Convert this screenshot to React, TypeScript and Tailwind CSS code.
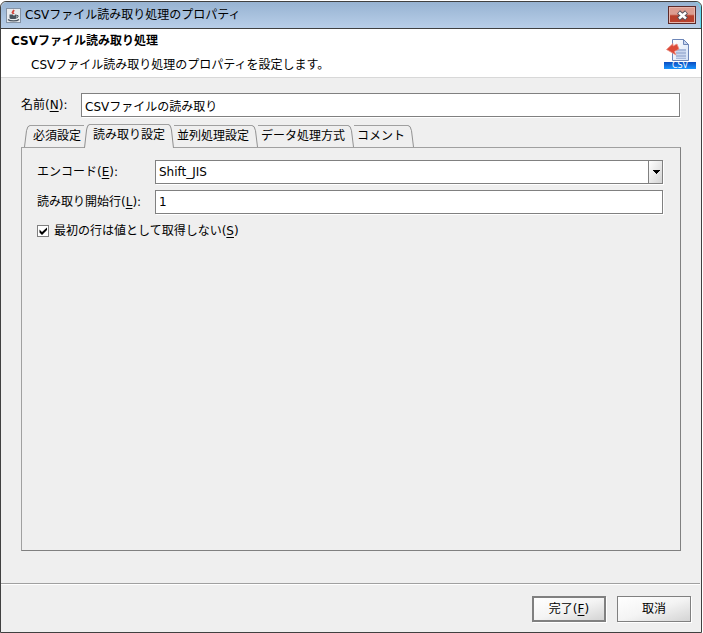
import { useState, type ReactNode } from "react";

const tabs = [
  "必須設定",
  "読み取り設定",
  "並列処理設定",
  "データ処理方式",
  "コメント",
];

const sunken = "h-6 border border-[#808080] bg-white px-[3px] outline-none shadow-[1px_1px_0_#fff]";

function Mnemonic({ text, letter, end = "" }: { text: string; letter: string; end?: string }) {
  return (
    <>
      {text}(<span className="underline underline-offset-2">{letter}</span>){end}
    </>
  );
}

function CupIcon() {
  return (
    <svg width="15" height="15" viewBox="0 0 15 15" aria-hidden="true">
      <rect x="0.5" y="0.5" width="14" height="14" fill="#e9ebee" stroke="#8593a5" />
      <path d="M8 2L6.5 4.5 8 6.500" fill="none" stroke="#d2453c" strokeWidth="1.8" />
      <path d="M3.500 6.500h7V10l-1 1h-5l-1-1z" fill="#4a545f" />
      <path d="M6.500 6L8 8l1.500-2z" fill="#e9ebee" />
      <path d="M10.500 7.500H12V9l-1.500 1" fill="none" stroke="#4a545f" />
      <path d="M2 11.500c2 1.800 9 1.800 11 0" fill="none" stroke="#4a545f" strokeWidth="1.4" />
    </svg>
  );
}

function CsvIcon() {
  return (
    <svg width="32" height="32" viewBox="0 0 32 32" aria-label="CSV" role="img">
      <defs>
        <linearGradient id="csvBand" x1="0" y1="0" x2="0" y2="1">
          <stop offset="0" stopColor="#0b4cc0" />
          <stop offset="1" stopColor="#1a96ff" />
        </linearGradient>
        <linearGradient id="csvPage" x1="0" y1="0" x2="1" y2="1">
          <stop offset="0" stopColor="#ffffff" />
          <stop offset="1" stopColor="#d5e2f6" />
        </linearGradient>
      </defs>
      <path d="M8.500 1.500h11l5 5v16h-16z" fill="url(#csvPage)" stroke="#6d86b8" />
      <path d="M19.500 1.500v5h5z" fill="#c8d6ef" stroke="#6d86b8" />
      <path d="M12 11h10v10H12z" fill="#a9badb" />
      <path d="M12 13.500h10M12 16.500h10M12 19.500h10" stroke="#c9d6ee" />
      <path d="M2.500 11.500L9 5.500v2.500l4-2 2 5-4.500 2.500 1.500 3.500z" fill="#dc4a38" stroke="#ea9287" strokeWidth="0.8" />
      <rect y="24" width="32" height="7" fill="url(#csvBand)" />
      <text
        x="16"
        y="30"
        textAnchor="middle"
        fontSize="8"
        fill="#fff"
        fontFamily="DejaVu Sans, sans-serif"
      >
        CSV
      </text>
    </svg>
  );
}

function LeftSlope() {
  return (
    <svg className="h-full w-1.5 shrink-0" viewBox="0 0 6 23" preserveAspectRatio="none" aria-hidden="true">
      <path d="M.5 23L2.500 6Q3.500 .5 6 .5" fill="none" stroke="#8f8f8f" />
    </svg>
  );
}

function RightSlope() {
  return (
    <svg className="h-full w-1.5 shrink-0" viewBox="0 0 6 23" preserveAspectRatio="none" aria-hidden="true">
      <path d="M0 .5Q2.500 .5 3.500 6L5.500 23" fill="none" stroke="#8f8f8f" />
    </svg>
  );
}

type TabProps = {
  label: string;
  selected: boolean;
  first: boolean;
  beforeSelected: boolean;
  onSelect: () => void;
};

function Tab({ label, selected, first, beforeSelected, onSelect }: TabProps) {
  return (
    <button
      type="button"
      role="tab"
      aria-selected={selected}
      onClick={onSelect}
      className={
        selected
          ? "relative z-10 -mb-px flex h-6 bg-[#efefef]"
          : "flex h-[22px]"
      }
    >
      {(first || selected) && <LeftSlope />}
      <span className="h-full whitespace-nowrap border-t border-[#a0a0a0] px-[3px] leading-5">
        {label}
      </span>
      {!beforeSelected && <RightSlope />}
    </button>
  );
}

function Row({ id, label, children }: { id: string; label: ReactNode; children: ReactNode }) {
  return (
    <div className="flex items-center">
      <label htmlFor={id} className="w-[118px] shrink-0 whitespace-nowrap">
        {label}
      </label>
      {children}
    </div>
  );
}

export default function App() {
  const [active, setActive] = useState(1);

  return (
    <div className="min-h-screen bg-white pr-px pt-px font-['DejaVu_Sans','Noto_Sans_CJK_JP',sans-serif] text-xs text-black">
      <div className="flex min-h-[calc(100vh-1px)] flex-col rounded-t-md border border-[#404040] bg-[#efefef]">
        <header className="flex h-[27px] items-center rounded-t-md border-b border-[#404040] bg-linear-to-b from-[#97b3d2] to-[#b8cee8] pl-[5px] pr-1 shadow-[inset_-1px_0_0_#5fd8ee]">
          <CupIcon />
          <h1 className="ml-1 grow">CSVファイル読み取り処理のプロパティ</h1>
          <button
            type="button"
            aria-label="閉じる"
            className="mr-px flex h-[18px] w-7 items-center justify-center border border-[#5c2a2a] bg-linear-to-b from-[#dc9c90] from-45% to-[#b8402c] to-55% shadow-[inset_0_0_0_1px_#e6b5ac]"
          >
            <svg width="13" height="11" viewBox="0 0 13 11" aria-hidden="true">
              <path d="M2.500 2l8 7M10.500 2l-8 7" stroke="#56505a" strokeWidth="4.500" />
              <path d="M3 2.500l7 6M10 2.500l-7 6" stroke="#fff" strokeWidth="2.500" />
            </svg>
          </button>
        </header>

        <div className="flex h-[49px] justify-between border-b border-[#d8d8d8] bg-white pl-2.5 pr-[5px]">
          <div>
            <h2 className="mt-1 font-bold leading-4">CSVファイル読み取り処理</h2>
            <p className="ml-5 mt-2 leading-4">CSVファイル読み取り処理のプロパティを設定します。</p>
          </div>
          <div className="pt-[9px]">
            <CsvIcon />
          </div>
        </div>

        <main className="flex grow flex-col px-5 pb-8 pt-[15px]">
          <div className="mr-px flex items-center">
            <label htmlFor="name" className="w-[60px] shrink-0">
              <Mnemonic text="名前" letter="N" end=":" />
            </label>
            <input id="name" defaultValue="CSVファイルの読み取り" className={`min-w-0 grow ${sunken}`} />
          </div>

          <div role="tablist" className="mt-[7px] flex h-[23px] items-end pl-[3px]">
            {tabs.map((label, i) => (
              <Tab
                key={label}
                label={label}
                selected={i === active}
                first={i === 0}
                beforeSelected={i === active - 1}
                onSelect={() => setActive(i)}
              />
            ))}
          </div>

          <div
            role="tabpanel"
            className="flex grow flex-col gap-1.5 border border-b-[#808080] border-l-[#a0a0a0] border-r-[#808080] border-t-[#a0a0a0] py-3 pl-[15px] pr-[17px]"
          >
            <Row id="encoding" label={<Mnemonic text="エンコード" letter="E" end=":" />}>
              <div className="relative min-w-0 grow">
                <select id="encoding" className={`block w-full appearance-none ${sunken}`}>
                  <option>Shift_JIS</option>
                  <option>UTF-8</option>
                  <option>EUC-JP</option>
                </select>
                <span className="pointer-events-none absolute inset-y-px right-px flex w-3.5 items-center justify-center border-l border-[#808080] bg-linear-to-br from-white to-[#d4d4d4]">
                  <svg width="8" height="4" viewBox="0 0 8 4" shapeRendering="crispEdges" aria-hidden="true">
                    <path d="M0 0h8L4 4z" />
                  </svg>
                </span>
              </div>
            </Row>
            <Row id="start" label={<Mnemonic text="読み取り開始行" letter="L" end=":" />}>
              <input id="start" defaultValue="1" className={`min-w-0 grow ${sunken}`} />
            </Row>
            <label className="flex items-center gap-[5px] leading-[22px]">
              <span className="grid">
                <input
                  type="checkbox"
                  defaultChecked
                  className="peer col-start-1 row-start-1 size-3 appearance-none border border-[#808080] bg-white"
                />
                <svg
                  className="pointer-events-none invisible col-start-1 row-start-1 size-3 peer-checked:visible"
                  viewBox="0 0 12 12"
                  aria-hidden="true"
                >
                  <path d="M2.500 4.500v3L5 10l5-5V2.500L5 7z" />
                </svg>
              </span>
              <span>
                <Mnemonic text="最初の行は値として取得しない" letter="S" />
              </span>
            </label>
          </div>
        </main>

        <footer className="mr-px flex justify-end gap-[11px] border-t border-[#a0a0a0] pb-2.5 pr-[9px] pt-3 shadow-[inset_0_1px_0_#fff]">
          <button
            type="button"
            className="h-[26px] w-[74px] border-2 border-[#808080] bg-linear-to-br from-white via-[#f4f4f4] to-[#d4d4d4] shadow-[1px_1px_0_#fff]"
          >
            <Mnemonic text="完了" letter="F" />
          </button>
          <button
            type="button"
            className="h-[26px] w-[74px] border border-[#808080] bg-linear-to-br from-white via-[#f4f4f4] to-[#d4d4d4] shadow-[1px_1px_0_#fff]"
          >
            取消
          </button>
        </footer>
      </div>
    </div>
  );
}
